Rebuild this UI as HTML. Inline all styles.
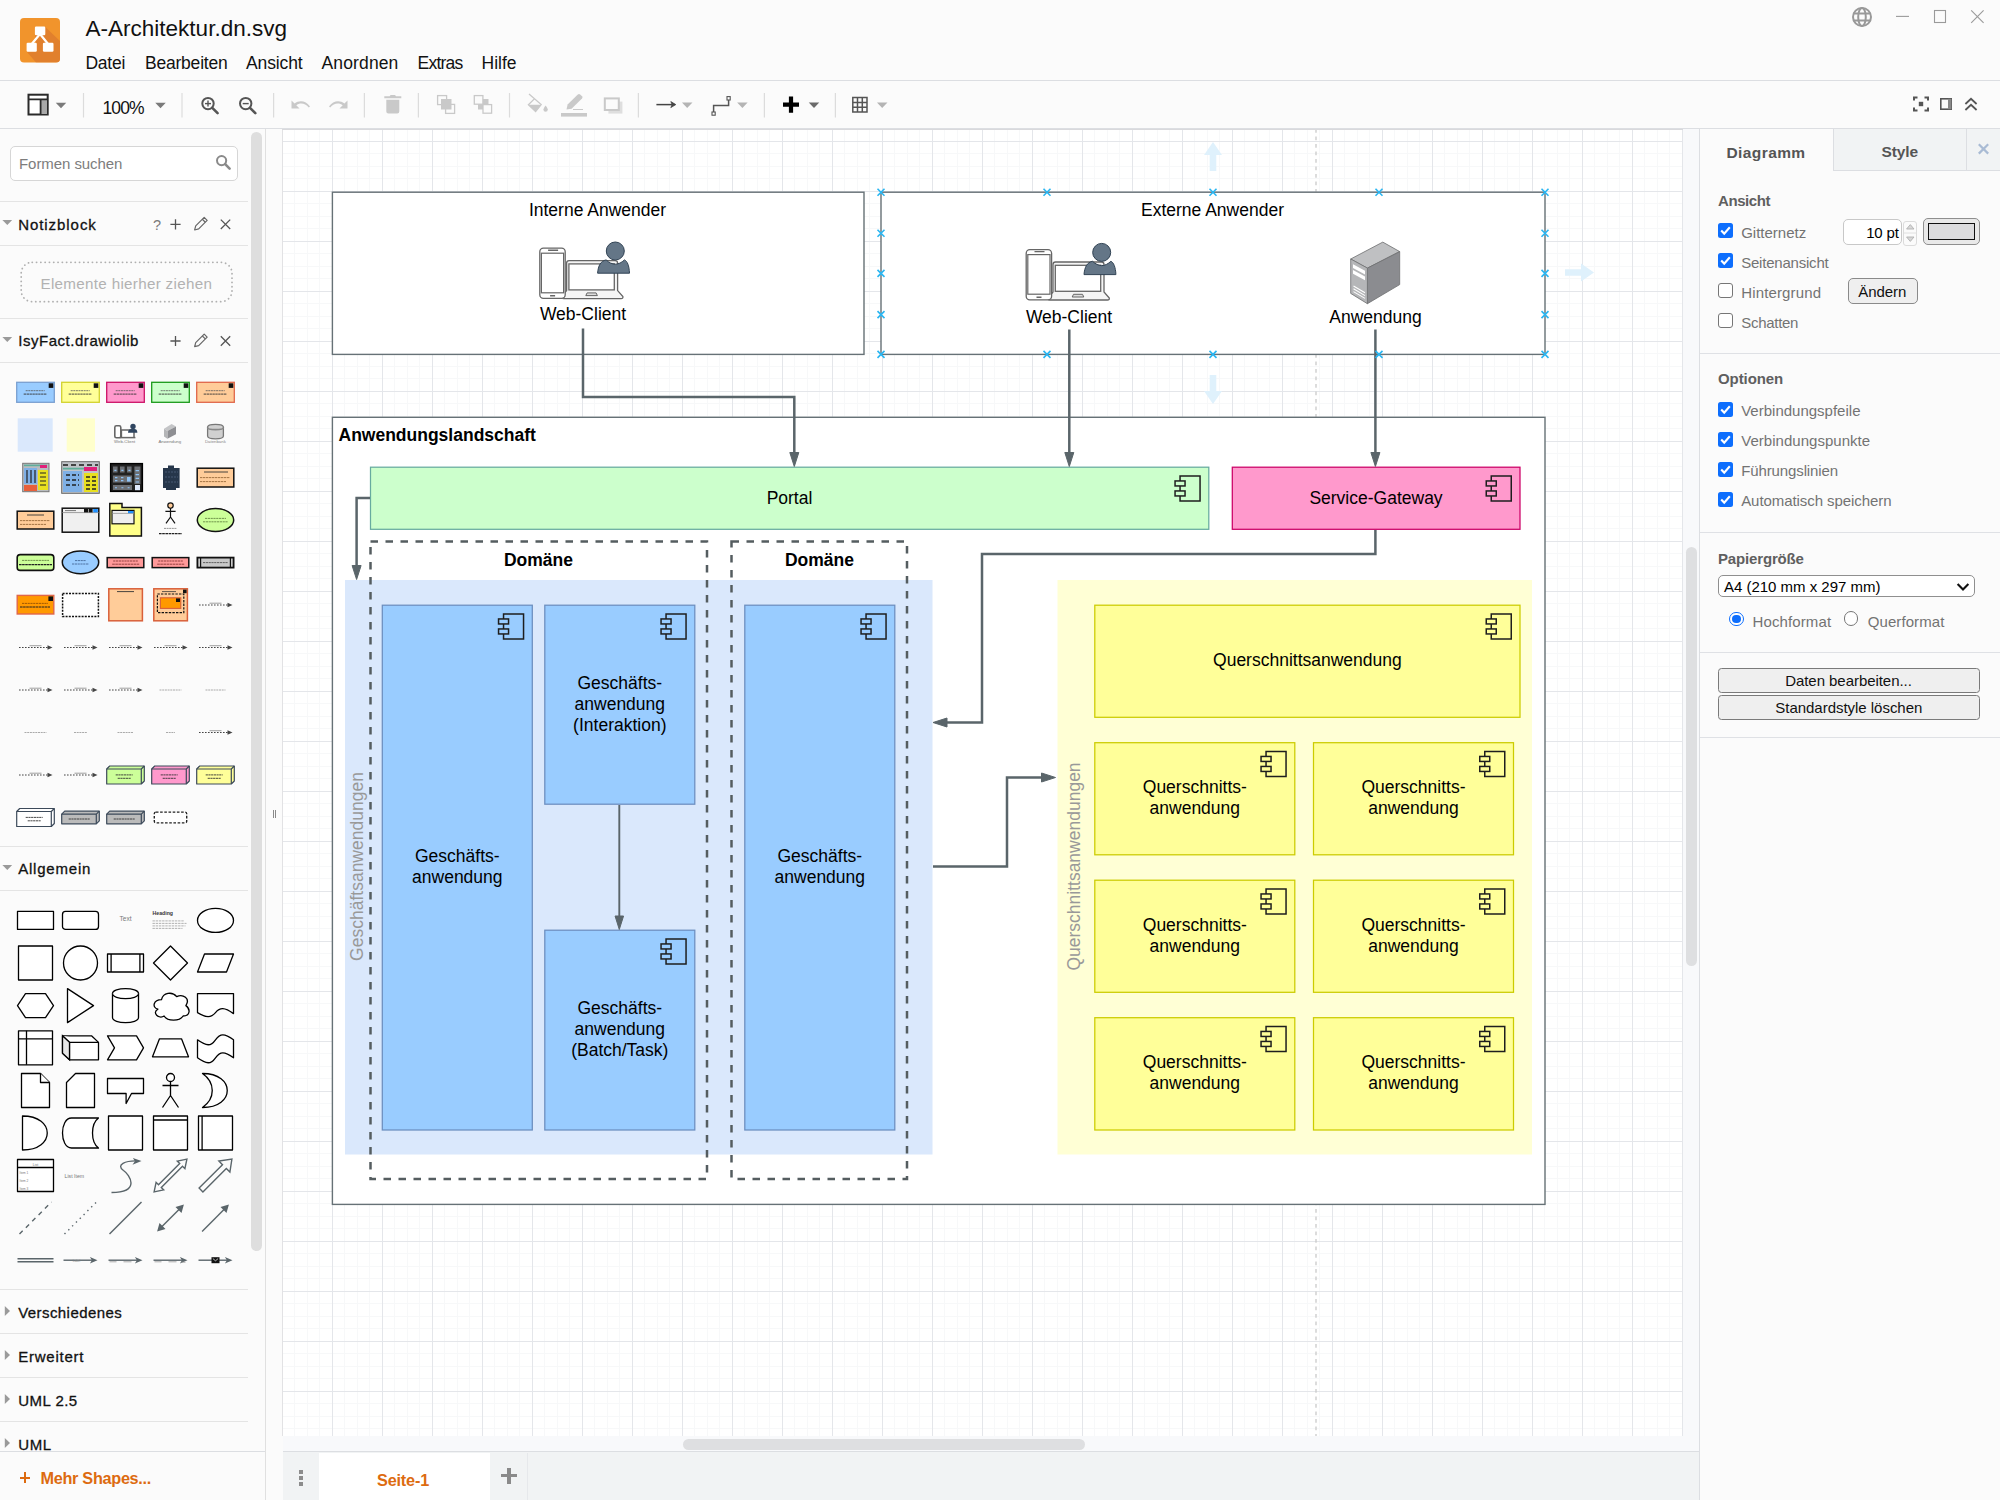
<!DOCTYPE html><html lang="de"><head><meta charset="utf-8"><title>A-Architektur.dn.svg</title><style>

*{box-sizing:border-box}
html,body{margin:0;padding:0}
body{width:2000px;height:1500px;overflow:hidden;background:#fbfbfb;font-family:"Liberation Sans",sans-serif;position:relative;color:#000}
.a{position:absolute}
.t{position:absolute;white-space:nowrap;line-height:1}
svg{position:absolute;overflow:visible}
svg text{font-family:"Liberation Sans",sans-serif}

</style></head><body>
<div class="a" style="left:283px;top:129px;width:1400px;height:1307px;background-color:#fff;background-image:linear-gradient(to right,#e4e6ea 0 1px,transparent 1px),linear-gradient(to bottom,#e4e6ea 0 1px,transparent 1px),linear-gradient(to right,transparent 0 12px,#f7f8f9 12px 13px,transparent 13px 25px,#f7f8f9 25px 26px,transparent 26px 37px,#f7f8f9 37px 38px,transparent 38px),linear-gradient(to bottom,transparent 0 12px,#f7f8f9 12px 13px,transparent 13px 25px,#f7f8f9 25px 26px,transparent 26px 37px,#f7f8f9 37px 38px,transparent 38px);background-size:50px 50px;background-position:49px 12px"></div>
<svg class="a" style="left:283px;top:129px" width="1400" height="1307" viewBox="283 129 1400 1307">
<defs><clipPath id="cv"><rect x="283" y="129" width="1400" height="1307"/></clipPath></defs>
<g clip-path="url(#cv)">
<path d="M1316 129V1436" stroke="#c8c8c8" stroke-width="1.25" stroke-dasharray="3.75 3.75" fill="none"/>
<g fill="#dff1fc"><path d="M1213 142l9 13h-5.7v16h-6.6v-16h-5.7z"/><path d="M1213 404l9-13h-5.7v-16h-6.6v16h-5.7z"/><path d="M1594 272.5l-13-9v5.7h-16v6.6h16v5.7z"/></g>
<rect x="332.4" y="192.2" width="531.6" height="162.2" fill="#fff" stroke="#667176" stroke-width="1.4" />
<rect x="881" y="192.2" width="664" height="162.2" fill="#fff" stroke="#667176" stroke-width="1.4" />
<rect x="332.4" y="417.3" width="1212.6" height="787.1000000000001" fill="#fff" stroke="#667176" stroke-width="1.4" />
<text x="597.5" y="215.60" font-size="17.5" text-anchor="middle" fill="#000">Interne Anwender</text>
<text x="1212.5" y="215.60" font-size="17.5" text-anchor="middle" fill="#000">Externe Anwender</text>
<text x="338.5" y="441" font-size="17.5" font-weight="bold">Anwendungslandschaft</text>
<g transform="translate(-486.4,-1.4)"><path d="M1053 292V264.5Q1053 262 1055.5 262H1101.5Q1104 262 1104 264.5V292L1109.3 298Q1109.6 300 1107.5 300H1050Q1047.6 300 1048 298Z" fill="#f5f5f5" stroke="#666" stroke-width="1.3"/><rect x="1055.3" y="265.3" width="45.4" height="26" fill="#fff" stroke="#666" stroke-width="1.3"/><path d="M1073.5 294.3H1082.5L1083.8 297H1072.2Z" fill="#ddd" stroke="#666" stroke-width="1"/><rect x="1026.2" y="249.6" width="25.4" height="50.2" rx="3.6" fill="#fff" stroke="#666" stroke-width="1.3"/><rect x="1027.8" y="254.6" width="22.2" height="39.6" fill="#fff" stroke="#666" stroke-width="1.2"/><path d="M1034.5 251.6H1044.5M1036.5 297.2H1041.5" stroke="#666" stroke-width="1.4"/><path d="M1084 274.6C1084.6 267 1087 262.5 1092.5 261.3C1095.5 264 1098.5 265.6 1101.7 265.6C1104.9 265.6 1107.9 264 1110.9 261.3C1113.5 262.3 1115.6 267 1115.9 274.6Z" fill="#647687" stroke="#314354" stroke-width="1"/><circle cx="1101.7" cy="252.4" r="9" fill="#647687" stroke="#314354" stroke-width="1"/></g>
<g transform="translate(0,0)"><path d="M1053 292V264.5Q1053 262 1055.5 262H1101.5Q1104 262 1104 264.5V292L1109.3 298Q1109.6 300 1107.5 300H1050Q1047.6 300 1048 298Z" fill="#f5f5f5" stroke="#666" stroke-width="1.3"/><rect x="1055.3" y="265.3" width="45.4" height="26" fill="#fff" stroke="#666" stroke-width="1.3"/><path d="M1073.5 294.3H1082.5L1083.8 297H1072.2Z" fill="#ddd" stroke="#666" stroke-width="1"/><rect x="1026.2" y="249.6" width="25.4" height="50.2" rx="3.6" fill="#fff" stroke="#666" stroke-width="1.3"/><rect x="1027.8" y="254.6" width="22.2" height="39.6" fill="#fff" stroke="#666" stroke-width="1.2"/><path d="M1034.5 251.6H1044.5M1036.5 297.2H1041.5" stroke="#666" stroke-width="1.4"/><path d="M1084 274.6C1084.6 267 1087 262.5 1092.5 261.3C1095.5 264 1098.5 265.6 1101.7 265.6C1104.9 265.6 1107.9 264 1110.9 261.3C1113.5 262.3 1115.6 267 1115.9 274.6Z" fill="#647687" stroke="#314354" stroke-width="1"/><circle cx="1101.7" cy="252.4" r="9" fill="#647687" stroke="#314354" stroke-width="1"/></g>
<g stroke="#6d6e70" stroke-width="0.8" stroke-linejoin="round"><path d="M1382.8 242.1L1399.7 251.6L1367.4 268.1L1350.7 259Z" fill="#bfc0c2"/><path d="M1399.7 251.6V284.6L1367.4 303.7V268.1Z" fill="#8b8c90"/><path d="M1350.7 259L1367.4 268.1V303.7L1350.7 293.4Z" fill="#b5b6b8"/></g><path d="M1353 264.3L1365 270.8V274.6L1353 268.1ZM1353 270L1365 276.5V280.3L1353 273.8Z" fill="#fff"/><path d="M1353.5 286L1365 292.8M1353.5 288.8L1365 295.6M1353.5 291.6L1365 298.4" stroke="#fff" stroke-width="1.1" fill="none"/>
<text x="583" y="320.30" font-size="17.5" text-anchor="middle" fill="#000">Web-Client</text>
<text x="1069" y="322.80" font-size="17.5" text-anchor="middle" fill="#000">Web-Client</text>
<text x="1375.5" y="322.80" font-size="17.5" text-anchor="middle" fill="#000">Anwendung</text>
<rect x="345" y="580" width="587.5" height="574.5" fill="#dae8fc" stroke="none" stroke-width="0" />
<rect x="1057.5" y="580" width="474.5" height="574.5" fill="#ffffd5" stroke="none" stroke-width="0" />
<rect x="370.5" y="467.2" width="838.3" height="62.099999999999966" fill="#ccffcc" stroke="#67ab9f" stroke-width="1.25" />
<g transform="translate(1175.05,475.95)" fill="none" stroke="#1e1e1e" stroke-width="1.5"><path d="M5 5V0H25V25H5V20M5 10V15"/><rect x="0" y="5" width="10" height="5"/><rect x="0" y="15" width="10" height="5"/></g>
<text x="789.5" y="504.10" font-size="17.5" text-anchor="middle" fill="#000">Portal</text>
<rect x="1232.3" y="467.2" width="287.70000000000005" height="62.099999999999966" fill="#ff99cc" stroke="#cc0066" stroke-width="1.25" />
<g transform="translate(1486.25,475.95)" fill="none" stroke="#1e1e1e" stroke-width="1.5"><path d="M5 5V0H25V25H5V20M5 10V15"/><rect x="0" y="5" width="10" height="5"/><rect x="0" y="15" width="10" height="5"/></g>
<text x="1376" y="504.10" font-size="17.5" text-anchor="middle" fill="#000">Service-Gateway</text>
<rect x="370.5" y="541.5" width="336.5" height="637.5" fill="none" stroke="#555d60" stroke-width="2.5" stroke-dasharray="7.5 7.5"/>
<rect x="731.5" y="541.5" width="175.5" height="637.5" fill="none" stroke="#555d60" stroke-width="2.5" stroke-dasharray="7.5 7.5"/>
<text x="538.5" y="566.10" font-size="17.5" text-anchor="middle" fill="#000" font-weight="bold">Domäne</text>
<text x="819.5" y="566.10" font-size="17.5" text-anchor="middle" fill="#000" font-weight="bold">Domäne</text>
<rect x="382.3" y="605.2" width="149.99999999999994" height="524.8" fill="#99ccff" stroke="#6c8ebf" stroke-width="1.25" />
<g transform="translate(498.55,613.95)" fill="none" stroke="#1e1e1e" stroke-width="1.5"><path d="M5 5V0H25V25H5V20M5 10V15"/><rect x="0" y="5" width="10" height="5"/><rect x="0" y="15" width="10" height="5"/></g>
<text x="457.29999999999995" y="861.70" font-size="17.5" text-anchor="middle" fill="#000">Geschäfts-</text><text x="457.29999999999995" y="882.70" font-size="17.5" text-anchor="middle" fill="#000">anwendung</text>
<rect x="544.8" y="605.2" width="150.0" height="199.0" fill="#99ccff" stroke="#6c8ebf" stroke-width="1.25" />
<g transform="translate(661.05,613.95)" fill="none" stroke="#1e1e1e" stroke-width="1.5"><path d="M5 5V0H25V25H5V20M5 10V15"/><rect x="0" y="5" width="10" height="5"/><rect x="0" y="15" width="10" height="5"/></g>
<text x="619.8" y="689.30" font-size="17.5" text-anchor="middle" fill="#000">Geschäfts-</text><text x="619.8" y="710.30" font-size="17.5" text-anchor="middle" fill="#000">anwendung</text><text x="619.8" y="731.30" font-size="17.5" text-anchor="middle" fill="#000">(Interaktion)</text>
<rect x="544.8" y="930.2" width="150.0" height="199.79999999999995" fill="#99ccff" stroke="#6c8ebf" stroke-width="1.25" />
<g transform="translate(661.05,938.95)" fill="none" stroke="#1e1e1e" stroke-width="1.5"><path d="M5 5V0H25V25H5V20M5 10V15"/><rect x="0" y="5" width="10" height="5"/><rect x="0" y="15" width="10" height="5"/></g>
<text x="619.8" y="1013.70" font-size="17.5" text-anchor="middle" fill="#000">Geschäfts-</text><text x="619.8" y="1034.70" font-size="17.5" text-anchor="middle" fill="#000">anwendung</text><text x="619.8" y="1055.70" font-size="17.5" text-anchor="middle" fill="#000">(Batch/Task)</text>
<rect x="744.8" y="605.2" width="150.0" height="524.8" fill="#99ccff" stroke="#6c8ebf" stroke-width="1.25" />
<g transform="translate(861.05,613.95)" fill="none" stroke="#1e1e1e" stroke-width="1.5"><path d="M5 5V0H25V25H5V20M5 10V15"/><rect x="0" y="5" width="10" height="5"/><rect x="0" y="15" width="10" height="5"/></g>
<text x="819.8" y="861.70" font-size="17.5" text-anchor="middle" fill="#000">Geschäfts-</text><text x="819.8" y="882.70" font-size="17.5" text-anchor="middle" fill="#000">anwendung</text>
<rect x="1094.8" y="605.2" width="425.20000000000005" height="112.09999999999991" fill="#ffff99" stroke="#cccc00" stroke-width="1.25" />
<g transform="translate(1486.25,613.95)" fill="none" stroke="#1e1e1e" stroke-width="1.5"><path d="M5 5V0H25V25H5V20M5 10V15"/><rect x="0" y="5" width="10" height="5"/><rect x="0" y="15" width="10" height="5"/></g>
<text x="1307.4" y="665.85" font-size="17.5" text-anchor="middle" fill="#000">Querschnittsanwendung</text>
<rect x="1094.8" y="742.7" width="200.0" height="112.09999999999991" fill="#ffff99" stroke="#cccc00" stroke-width="1.25" />
<g transform="translate(1261.05,751.45)" fill="none" stroke="#1e1e1e" stroke-width="1.5"><path d="M5 5V0H25V25H5V20M5 10V15"/><rect x="0" y="5" width="10" height="5"/><rect x="0" y="15" width="10" height="5"/></g>
<text x="1194.8" y="792.85" font-size="17.5" text-anchor="middle" fill="#000">Querschnitts-</text><text x="1194.8" y="813.85" font-size="17.5" text-anchor="middle" fill="#000">anwendung</text>
<rect x="1313.5" y="742.7" width="200.0" height="112.09999999999991" fill="#ffff99" stroke="#cccc00" stroke-width="1.25" />
<g transform="translate(1479.75,751.45)" fill="none" stroke="#1e1e1e" stroke-width="1.5"><path d="M5 5V0H25V25H5V20M5 10V15"/><rect x="0" y="5" width="10" height="5"/><rect x="0" y="15" width="10" height="5"/></g>
<text x="1413.5" y="792.85" font-size="17.5" text-anchor="middle" fill="#000">Querschnitts-</text><text x="1413.5" y="813.85" font-size="17.5" text-anchor="middle" fill="#000">anwendung</text>
<rect x="1094.8" y="880.2" width="200.0" height="112.09999999999991" fill="#ffff99" stroke="#cccc00" stroke-width="1.25" />
<g transform="translate(1261.05,888.95)" fill="none" stroke="#1e1e1e" stroke-width="1.5"><path d="M5 5V0H25V25H5V20M5 10V15"/><rect x="0" y="5" width="10" height="5"/><rect x="0" y="15" width="10" height="5"/></g>
<text x="1194.8" y="931.35" font-size="17.5" text-anchor="middle" fill="#000">Querschnitts-</text><text x="1194.8" y="952.35" font-size="17.5" text-anchor="middle" fill="#000">anwendung</text>
<rect x="1313.5" y="880.2" width="200.0" height="112.09999999999991" fill="#ffff99" stroke="#cccc00" stroke-width="1.25" />
<g transform="translate(1479.75,888.95)" fill="none" stroke="#1e1e1e" stroke-width="1.5"><path d="M5 5V0H25V25H5V20M5 10V15"/><rect x="0" y="5" width="10" height="5"/><rect x="0" y="15" width="10" height="5"/></g>
<text x="1413.5" y="931.35" font-size="17.5" text-anchor="middle" fill="#000">Querschnitts-</text><text x="1413.5" y="952.35" font-size="17.5" text-anchor="middle" fill="#000">anwendung</text>
<rect x="1094.8" y="1017.7" width="200.0" height="112.29999999999995" fill="#ffff99" stroke="#cccc00" stroke-width="1.25" />
<g transform="translate(1261.05,1026.45)" fill="none" stroke="#1e1e1e" stroke-width="1.5"><path d="M5 5V0H25V25H5V20M5 10V15"/><rect x="0" y="5" width="10" height="5"/><rect x="0" y="15" width="10" height="5"/></g>
<text x="1194.8" y="1067.95" font-size="17.5" text-anchor="middle" fill="#000">Querschnitts-</text><text x="1194.8" y="1088.95" font-size="17.5" text-anchor="middle" fill="#000">anwendung</text>
<rect x="1313.5" y="1017.7" width="200.0" height="112.29999999999995" fill="#ffff99" stroke="#cccc00" stroke-width="1.25" />
<g transform="translate(1479.75,1026.45)" fill="none" stroke="#1e1e1e" stroke-width="1.5"><path d="M5 5V0H25V25H5V20M5 10V15"/><rect x="0" y="5" width="10" height="5"/><rect x="0" y="15" width="10" height="5"/></g>
<text x="1413.5" y="1067.95" font-size="17.5" text-anchor="middle" fill="#000">Querschnitts-</text><text x="1413.5" y="1088.95" font-size="17.5" text-anchor="middle" fill="#000">anwendung</text>
<text transform="translate(363,866.5) rotate(-90)" font-size="17.5" text-anchor="middle" fill="#999">Geschäftsanwendungen</text>
<text transform="translate(1079.5,866.5) rotate(-90)" font-size="17.5" text-anchor="middle" fill="#999">Querschnittsanwendungen</text>
<path d="M583.00 328.50 L583.00 397.00 L794.30 397.00 L794.30 452.50" fill="none" stroke="#5a656a" stroke-width="2.5" stroke-linejoin="miter"/><path d="M794.30 466.50 L789.80 452.50 L798.80 452.50Z" fill="#5a656a" stroke="#5a656a" stroke-width="1" stroke-linejoin="miter"/>
<path d="M1069.30 329.50 L1069.30 452.50" fill="none" stroke="#5a656a" stroke-width="2.5" stroke-linejoin="miter"/><path d="M1069.30 466.50 L1064.80 452.50 L1073.80 452.50Z" fill="#5a656a" stroke="#5a656a" stroke-width="1" stroke-linejoin="miter"/>
<path d="M1375.40 329.50 L1375.40 452.50" fill="none" stroke="#5a656a" stroke-width="2.5" stroke-linejoin="miter"/><path d="M1375.40 466.50 L1370.90 452.50 L1379.90 452.50Z" fill="#5a656a" stroke="#5a656a" stroke-width="1" stroke-linejoin="miter"/>
<path d="M370.00 498.00 L356.60 498.00 L356.60 565.50" fill="none" stroke="#5a656a" stroke-width="2.5" stroke-linejoin="miter"/><path d="M356.60 579.50 L352.10 565.50 L361.10 565.50Z" fill="#5a656a" stroke="#5a656a" stroke-width="1" stroke-linejoin="miter"/>
<path d="M1375.40 530.00 L1375.40 554.00 L982.00 554.00 L982.00 722.50 L947.00 722.50" fill="none" stroke="#5a656a" stroke-width="2.5" stroke-linejoin="miter"/><path d="M933.00 722.50 L947.00 718.00 L947.00 727.00Z" fill="#5a656a" stroke="#5a656a" stroke-width="1" stroke-linejoin="miter"/>
<path d="M933.00 866.50 L1007.00 866.50 L1007.00 777.50 L1041.50 777.50" fill="none" stroke="#5a656a" stroke-width="2.5" stroke-linejoin="miter"/><path d="M1055.50 777.50 L1041.50 782.00 L1041.50 773.00Z" fill="#5a656a" stroke="#5a656a" stroke-width="1" stroke-linejoin="miter"/>
<path d="M619.30 805.00 L619.30 916.00" fill="none" stroke="#5a656a" stroke-width="1.9" stroke-linejoin="miter"/><path d="M619.30 929.50 L615.05 916.00 L623.55 916.00Z" fill="#5a656a" stroke="#5a656a" stroke-width="1" stroke-linejoin="miter"/>
<path d="M877.5 188.7L884.5 195.7M884.5 188.7L877.5 195.7" stroke="#29b6f2" stroke-width="1.6" fill="none"/>
<path d="M877.5 350.9L884.5 357.9M884.5 350.9L877.5 357.9" stroke="#29b6f2" stroke-width="1.6" fill="none"/>
<path d="M1043.5 188.7L1050.5 195.7M1050.5 188.7L1043.5 195.7" stroke="#29b6f2" stroke-width="1.6" fill="none"/>
<path d="M1043.5 350.9L1050.5 357.9M1050.5 350.9L1043.5 357.9" stroke="#29b6f2" stroke-width="1.6" fill="none"/>
<path d="M1209.5 188.7L1216.5 195.7M1216.5 188.7L1209.5 195.7" stroke="#29b6f2" stroke-width="1.6" fill="none"/>
<path d="M1209.5 350.9L1216.5 357.9M1216.5 350.9L1209.5 357.9" stroke="#29b6f2" stroke-width="1.6" fill="none"/>
<path d="M1375.5 188.7L1382.5 195.7M1382.5 188.7L1375.5 195.7" stroke="#29b6f2" stroke-width="1.6" fill="none"/>
<path d="M1375.5 350.9L1382.5 357.9M1382.5 350.9L1375.5 357.9" stroke="#29b6f2" stroke-width="1.6" fill="none"/>
<path d="M1541.5 188.7L1548.5 195.7M1548.5 188.7L1541.5 195.7" stroke="#29b6f2" stroke-width="1.6" fill="none"/>
<path d="M1541.5 350.9L1548.5 357.9M1548.5 350.9L1541.5 357.9" stroke="#29b6f2" stroke-width="1.6" fill="none"/>
<path d="M877.5 229.7L884.5 236.7M884.5 229.7L877.5 236.7" stroke="#29b6f2" stroke-width="1.6" fill="none"/>
<path d="M1541.5 229.7L1548.5 236.7M1548.5 229.7L1541.5 236.7" stroke="#29b6f2" stroke-width="1.6" fill="none"/>
<path d="M877.5 269.9L884.5 276.9M884.5 269.9L877.5 276.9" stroke="#29b6f2" stroke-width="1.6" fill="none"/>
<path d="M1541.5 269.9L1548.5 276.9M1548.5 269.9L1541.5 276.9" stroke="#29b6f2" stroke-width="1.6" fill="none"/>
<path d="M877.5 311.1L884.5 318.1M884.5 311.1L877.5 318.1" stroke="#29b6f2" stroke-width="1.6" fill="none"/>
<path d="M1541.5 311.1L1548.5 318.1M1548.5 311.1L1541.5 318.1" stroke="#29b6f2" stroke-width="1.6" fill="none"/>
</g></svg>
<div class="a" style="left:0px;top:80px;width:2000px;height:1px;background:#dcdee2"></div>
<div class="a" style="left:0px;top:128px;width:2000px;height:1px;background:#dcdee2"></div>
<div class="a" style="left:282px;top:129px;width:1px;height:1307px;background:#e2e2e4"></div>
<div class="a" style="left:282px;top:129px;width:1401px;height:1px;background:#d9d9dc"></div>
<div class="a" style="left:1683px;top:129px;width:16px;height:1323px;background:#f8f9fb"></div>
<div class="a" style="left:283px;top:1436px;width:1400px;height:16px;background:#f8f9fb"></div>
<div class="a" style="left:683px;top:1439px;width:402px;height:11px;background:#dedfe1;border-radius:6px"></div>
<div class="a" style="left:1686px;top:547px;width:11px;height:419px;background:#dedfe1;border-radius:6px"></div>
<div class="a" style="left:283px;top:1452px;width:1416px;height:48px;background:#f1f3f4"></div>
<div class="a" style="left:283px;top:1451px;width:1416px;height:1px;background:#dcdee2"></div>
<div class="a" style="left:319px;top:1453px;width:171px;height:47px;background:#fff"></div>
<div class="a" style="left:527px;top:1453px;width:1px;height:47px;background:#e6e8eb"></div>
<div class="a" style="left:299px;top:1469.5px;width:4px;height:4px;background:#8c8c8c"></div>
<div class="a" style="left:299px;top:1475.5px;width:4px;height:4px;background:#8c8c8c"></div>
<div class="a" style="left:299px;top:1481.5px;width:4px;height:4px;background:#8c8c8c"></div>
<div class="t" style="left:377px;top:1472px;font-size:16.25px;color:#dd6b10;font-weight:bold;letter-spacing:-0.185px;">Seite-1</div>
<div class="a" style="left:501px;top:1473.8px;width:16px;height:3.4px;background:#8a8a8a"></div>
<div class="a" style="left:507.3px;top:1467.5px;width:3.4px;height:16px;background:#8a8a8a"></div>
<div class="t" style="left:85.5px;top:18px;font-size:22.5px;color:#111;letter-spacing:0.008px;">A-Architektur.dn.svg</div>
<div class="t" style="left:85.5px;top:55px;font-size:17.5px;color:#111;letter-spacing:-0.272px;">Datei</div>
<div class="t" style="left:145px;top:55px;font-size:17.5px;color:#111;letter-spacing:-0.216px;">Bearbeiten</div>
<div class="t" style="left:246px;top:55px;font-size:17.5px;color:#111;letter-spacing:-0.127px;">Ansicht</div>
<div class="t" style="left:321.5px;top:55px;font-size:17.5px;color:#111;letter-spacing:0.137px;">Anordnen</div>
<div class="t" style="left:417.5px;top:55px;font-size:17.5px;color:#111;letter-spacing:-0.768px;">Extras</div>
<div class="t" style="left:481.5px;top:55px;font-size:17.5px;color:#111;letter-spacing:-0.003px;">Hilfe</div>
<div class="t" style="left:102.5px;top:100px;font-size:17.5px;color:#111;letter-spacing:-0.891px;">100%</div>
<svg class="a" style="left:0;top:0" width="2000" height="129" viewBox="0 0 2000 129"><defs><clipPath id="lg"><rect x="20" y="18" width="40" height="44.5" rx="4"/></clipPath></defs><rect x="20" y="18" width="40" height="44.5" rx="4" fill="#f1942c"/><path d="M45.3 27L60 41V62.5H36L27 52L36.5 51.5L35 35Z" fill="#e1802d" clip-path="url(#lg)"/><path d="M40 34L31.7 44M40 34L48.1 44" stroke="#fff" stroke-width="2.2" fill="none"/><rect x="34.9" y="26.5" width="10.4" height="8.8" rx="1.2" fill="#fff"/><rect x="26.6" y="42.8" width="10.2" height="8.9" rx="1.2" fill="#fff"/><rect x="42.9" y="42.8" width="10.6" height="8.9" rx="1.2" fill="#fff"/><rect x="82.9" y="93" width="1.2" height="24.5" fill="#dcdcdc"/><rect x="181.4" y="93" width="1.2" height="24.5" fill="#dcdcdc"/><rect x="273.0" y="93" width="1.2" height="24.5" fill="#dcdcdc"/><rect x="363.79999999999995" y="93" width="1.2" height="24.5" fill="#dcdcdc"/><rect x="417.79999999999995" y="93" width="1.2" height="24.5" fill="#dcdcdc"/><rect x="508.9" y="93" width="1.2" height="24.5" fill="#dcdcdc"/><rect x="637.8" y="93" width="1.2" height="24.5" fill="#dcdcdc"/><rect x="763.8" y="93" width="1.2" height="24.5" fill="#dcdcdc"/><rect x="834.8" y="93" width="1.2" height="24.5" fill="#dcdcdc"/><rect x="28.5" y="94.7" width="19.2" height="19.8" fill="#fff" stroke="#2a2a2a" stroke-width="2"/><rect x="41" y="99.5" width="6" height="14.5" fill="#a8a8a8"/><path d="M28.5 99.3H47.7M40.6 99.3V114.5" stroke="#2a2a2a" stroke-width="1.8" fill="none"/><path d="M55.75 102.75H66.25L61 108.25Z" fill="#7a7a7a"/><path d="M155.25 102.75H165.75L160.5 108.25Z" fill="#7a7a7a"/><circle cx="208" cy="103.6" r="5.7" fill="none" stroke="#555" stroke-width="2"/><path d="M212.3 107.9L217.6 113.2" stroke="#555" stroke-width="2.6" stroke-linecap="round"/><path d="M205 103.6H211" stroke="#555" stroke-width="1.4"/><path d="M208 100.6V106.6" stroke="#555" stroke-width="1.4"/><circle cx="245.7" cy="103.6" r="5.7" fill="none" stroke="#555" stroke-width="2"/><path d="M250.0 107.9L255.29999999999998 113.2" stroke="#555" stroke-width="2.6" stroke-linecap="round"/><path d="M242.7 103.6H248.7" stroke="#555" stroke-width="1.4"/><path d="M291.5 100.5V108.5H299.5L296.3 105.3C299.5 102.8 305 102.6 308.8 107.6L310 106.6C305.8 100.2 298.8 100.2 294.6 103.6Z" fill="#c9c9c9"/><path d="M347.5 100.5V108.5H339.5L342.7 105.3C339.5 102.8 334 102.6 330.2 107.6L329 106.6C333.2 100.2 340.2 100.2 344.4 103.6Z" fill="#c9c9c9"/><path d="M386.3 99.8H399.3V111.5Q399.3 113.6 397.2 113.6H388.4Q386.3 113.6 386.3 111.5ZM384.3 96.3H389.6L390.6 95.1H395L396 96.3H401.3V98.3H384.3Z" fill="#c9c9c9"/><rect x="437.6" y="95.6" width="9" height="9" fill="none" stroke="#c9c9c9" stroke-width="1.3"/><rect x="445.6" y="104.4" width="9" height="9" fill="none" stroke="#c9c9c9" stroke-width="1.3"/><rect x="441" y="99" width="10.5" height="10.5" fill="#c9c9c9"/><rect x="478" y="99" width="10.5" height="10.5" fill="#c9c9c9"/><rect x="474.3" y="95.6" width="8.6" height="8.6" fill="#fbfbfb" stroke="#c9c9c9" stroke-width="1.3"/><rect x="483" y="104.6" width="8.6" height="8.6" fill="#fbfbfb" stroke="#c9c9c9" stroke-width="1.3"/><path d="M529 94L541.2 104.6L535.6 111.6L528.4 104.8L534.6 98.6" fill="none" stroke="#c9c9c9" stroke-width="1.3"/><path d="M528.4 104.8H541.2L535.6 111.6Z" fill="#c9c9c9"/><path d="M545.6 105.4C547 107.4 547.8 108.6 547.8 109.6A2.2 2.2 0 0 1 543.4 109.6C543.4 108.6 544.2 107.4 545.6 105.4Z" fill="#c9c9c9"/><rect x="561" y="113" width="26" height="3.6" fill="#c9c9c9"/><path d="M566.5 109.5L567.6 104.6L577.8 94.4Q579 93.4 580.2 94.4L582 96.2Q583 97.4 582 98.6L571.6 108.8Z" fill="#c9c9c9"/><path d="M573 109.5H583" stroke="#c9c9c9" stroke-width="1"/><rect x="608.4" y="101.6" width="14" height="12" fill="#dedede"/><rect x="604.8" y="98.4" width="14" height="11.6" fill="#fbfbfb" stroke="#c9c9c9" stroke-width="2"/><path d="M656.4 104.6H672" stroke="#444" stroke-width="1.5" fill="none"/><path d="M675.8 104.6L670.8 101.6L672.2 104.6L670.8 107.6Z" fill="#444" stroke="#444" stroke-width="0.8"/><path d="M681.95 102.55H692.45L687.2 108.05Z" fill="#b4b4b4"/><path d="M737.15 102.55H747.65L742.4 108.05Z" fill="#b4b4b4"/><path d="M713.6 112V105.4H728.6V100" stroke="#555" stroke-width="1.5" fill="none"/><rect x="712" y="112" width="3.2" height="3.2" fill="#fff" stroke="#555" stroke-width="1.1"/><rect x="727" y="96.6" width="3.2" height="3.4" fill="#fff" stroke="#555" stroke-width="1.1"/><path d="M783 104.6H799M791 96.5V112.7" stroke="#000" stroke-width="4.2" fill="none"/><path d="M808.75 102.55H819.25L814 108.05Z" fill="#6a6a6a"/><path d="M852.8 97.6H867V112H852.8ZM857.5 97.6V112M862.3 97.6V112M852.8 102.4H867M852.8 107.2H867" stroke="#555" stroke-width="1.5" fill="none"/><path d="M876.95 102.55H887.45L882.2 108.05Z" fill="#b4b4b4"/><g stroke="#555" stroke-width="2" fill="none"><path d="M1914 100.5V97.5H1917.5M1924.5 97.5H1928V100.5M1928 107.5V110.5H1924.5M1917.5 110.5H1914V107.5"/></g><rect x="1918.8" y="101.8" width="4.4" height="4.4" fill="#555"/><rect x="1940.8" y="98.8" width="10.4" height="10.4" fill="none" stroke="#555" stroke-width="1.6"/><rect x="1948" y="98.8" width="3.4" height="10.4" fill="#888"/><path d="M1965.4 104L1971 98.8L1976.6 104M1965.4 110L1971 104.8L1976.6 110" stroke="#555" stroke-width="1.8" fill="none"/><g stroke="#999" stroke-width="2" fill="none"><circle cx="1862" cy="17" r="9"/><ellipse cx="1862" cy="17" rx="3.8" ry="9"/><path d="M1853.6 13.6H1870.4M1853.6 20.4H1870.4"/></g><path d="M1896 16.4H1909" stroke="#9a9a9a" stroke-width="1.1"/><rect x="1934.5" y="10.5" width="11" height="12" fill="none" stroke="#9a9a9a" stroke-width="1.1"/><path d="M1971.2 10.4L1983.6 22.8M1983.6 10.4L1971.2 22.8" stroke="#9a9a9a" stroke-width="1.1"/></svg>
<div class="a" style="left:265px;top:129px;width:1px;height:1371px;background:#e0e0e0"></div>
<div class="a" style="left:251px;top:132px;width:11px;height:1119px;background:#dedede;border-radius:6px"></div>
<div class="a" style="left:10px;top:146px;width:228px;height:35px;background:#fff;border:1px solid #d6d6d6;border-radius:5px"></div>
<div class="t" style="left:19px;top:156px;font-size:15px;color:#7d7d7d;letter-spacing:-0.063px;">Formen suchen</div>
<div class="a" style="left:0px;top:201px;width:248px;height:1px;background:#e4e4e4"></div>
<div class="a" style="left:0px;top:245px;width:248px;height:1px;background:#e4e4e4"></div>
<div class="a" style="left:0px;top:318px;width:248px;height:1px;background:#e4e4e4"></div>
<div class="a" style="left:0px;top:362px;width:248px;height:1px;background:#e4e4e4"></div>
<div class="a" style="left:0px;top:846px;width:248px;height:1px;background:#e4e4e4"></div>
<div class="a" style="left:0px;top:890px;width:248px;height:1px;background:#e4e4e4"></div>
<div class="a" style="left:0px;top:1289px;width:248px;height:1px;background:#e4e4e4"></div>
<div class="a" style="left:0px;top:1333px;width:248px;height:1px;background:#e4e4e4"></div>
<div class="a" style="left:0px;top:1377px;width:248px;height:1px;background:#e4e4e4"></div>
<div class="a" style="left:0px;top:1421px;width:248px;height:1px;background:#e4e4e4"></div>
<div class="a" style="left:0px;top:1451px;width:265px;height:1px;background:#dcdee2"></div>
<div class="t" style="left:18.2px;top:217px;font-size:15px;color:#111;letter-spacing:0.940px;-webkit-text-stroke:0.3px #111;">Notizblock</div>
<div class="t" style="left:18.2px;top:333px;font-size:15px;color:#111;letter-spacing:0.535px;-webkit-text-stroke:0.3px #111;">IsyFact.drawiolib</div>
<div class="t" style="left:18.2px;top:861px;font-size:15px;color:#111;letter-spacing:0.792px;-webkit-text-stroke:0.3px #111;">Allgemein</div>
<div class="t" style="left:18.2px;top:1305px;font-size:15px;color:#111;letter-spacing:0.430px;-webkit-text-stroke:0.3px #111;">Verschiedenes</div>
<div class="t" style="left:18.2px;top:1349px;font-size:15px;color:#111;letter-spacing:0.757px;-webkit-text-stroke:0.3px #111;">Erweitert</div>
<div class="t" style="left:18.2px;top:1393px;font-size:15px;color:#111;letter-spacing:0.480px;-webkit-text-stroke:0.3px #111;">UML 2.5</div>
<div class="t" style="left:18.2px;top:1437px;font-size:15px;color:#111;letter-spacing:0.609px;-webkit-text-stroke:0.3px #111;">UML</div>
<div class="t" style="left:40.5px;top:276px;font-size:15.2px;color:#b2b2b2;letter-spacing:0.307px;">Elemente hierher ziehen</div>
<div class="a" style="left:0px;top:1452px;width:265px;height:48px;background:#fbfbfb"></div>
<div class="t" style="left:40.5px;top:1470px;font-size:16.25px;color:#dd6b10;font-weight:bold;letter-spacing:-0.299px;">Mehr Shapes...</div>
<div class="a" style="left:19.5px;top:1476.6px;width:10.5px;height:2.2px;background:#dd6b10"></div>
<div class="a" style="left:23.65px;top:1472.4px;width:2.2px;height:10.6px;background:#dd6b10"></div>
<div class="a" style="left:272.6px;top:809.5px;width:1.2px;height:8px;background:#8a8a8a"></div>
<div class="a" style="left:275.2px;top:809.5px;width:1.2px;height:8px;background:#8a8a8a"></div>
<svg class="a" style="left:0;top:129px" width="266" height="1323" viewBox="0 129 266 1323"><circle cx="221.6" cy="160.6" r="4.6" fill="none" stroke="#8a8a8a" stroke-width="2"/><path d="M225.2 164.2L229.6 168.6" stroke="#8a8a8a" stroke-width="2.6" stroke-linecap="round"/><rect x="21.2" y="262.3" width="210.8" height="39.4" rx="11" fill="none" stroke="#b0b0b0" stroke-width="1.8" stroke-dasharray="0.1 4.2" stroke-linecap="round"/><path d="M2.4 219.9H12.2L7.3 225.1Z" fill="#9a9a9a"/><text x="157" y="229.70000000000002" font-size="14.5" fill="#7a7a7a" text-anchor="middle">?</text><path d="M170.4 224.3H180.6M175.5 219.20000000000002V229.4" stroke="#555" stroke-width="1.3" fill="none"/><g transform="translate(200.3,224.3) rotate(45)"><path d="M-2.1 -7.6H2.1V4.4L0 8L-2.1 4.4Z" fill="none" stroke="#666" stroke-width="1.2" stroke-linejoin="round"/><path d="M-2.1 -5H2.1" stroke="#666" stroke-width="1.2"/></g><path d="M220.8 219.60000000000002L230.2 229.0M230.2 219.60000000000002L220.8 229.0" stroke="#555" stroke-width="1.3" fill="none"/><path d="M2.4 336.9H12.2L7.3 342.1Z" fill="#9a9a9a"/><path d="M170.4 341H180.6M175.5 335.9V346.1" stroke="#555" stroke-width="1.3" fill="none"/><g transform="translate(200.3,341) rotate(45)"><path d="M-2.1 -7.6H2.1V4.4L0 8L-2.1 4.4Z" fill="none" stroke="#666" stroke-width="1.2" stroke-linejoin="round"/><path d="M-2.1 -5H2.1" stroke="#666" stroke-width="1.2"/></g><path d="M220.8 336.3L230.2 345.7M230.2 336.3L220.8 345.7" stroke="#555" stroke-width="1.3" fill="none"/><path d="M2.4 864.9H12.2L7.3 870.1Z" fill="#9a9a9a"/><path d="M4.8 1306L10 1311L4.8 1316Z" fill="#9a9a9a"/><path d="M4.8 1350L10 1355L4.8 1360Z" fill="#9a9a9a"/><path d="M4.8 1394L10 1399L4.8 1404Z" fill="#9a9a9a"/><path d="M4.8 1438L10 1443L4.8 1448Z" fill="#9a9a9a"/><rect x="16.7" y="382.3" width="37.6" height="20" fill="#99ccff" stroke="#7a9fd0" stroke-width="1.3"/><rect x="48.7" y="383.3" width="4.6" height="4.6" fill="#111"/><path d="M25.7 390.7H44.7" stroke="#555" stroke-width="0.8" stroke-dasharray="2 0.6"/><path d="M23.7 394.1H46.7" stroke="#333" stroke-width="0.9" stroke-dasharray="2.4 0.5"/><rect x="61.7" y="382.3" width="37.6" height="20" fill="#ffff99" stroke="#d2d22e" stroke-width="1.3"/><rect x="93.7" y="383.3" width="4.6" height="4.6" fill="#111"/><path d="M70.7 390.7H89.7" stroke="#555" stroke-width="0.8" stroke-dasharray="2 0.6"/><path d="M68.7 394.1H91.7" stroke="#333" stroke-width="0.9" stroke-dasharray="2.4 0.5"/><rect x="106.7" y="382.3" width="37.6" height="20" fill="#ff99cc" stroke="#cc1166" stroke-width="1.3"/><rect x="138.7" y="383.3" width="4.6" height="4.6" fill="#111"/><path d="M115.7 390.7H134.7" stroke="#555" stroke-width="0.8" stroke-dasharray="2 0.6"/><path d="M113.7 394.1H136.7" stroke="#333" stroke-width="0.9" stroke-dasharray="2.4 0.5"/><rect x="151.7" y="382.3" width="37.6" height="20" fill="#ccffcc" stroke="#1a9a1a" stroke-width="1.3"/><rect x="183.7" y="383.3" width="4.6" height="4.6" fill="#111"/><path d="M160.7 390.7H179.7" stroke="#555" stroke-width="0.8" stroke-dasharray="2 0.6"/><path d="M158.7 394.1H181.7" stroke="#333" stroke-width="0.9" stroke-dasharray="2.4 0.5"/><rect x="196.7" y="382.3" width="37.6" height="20" fill="#ffcc99" stroke="#e0664a" stroke-width="1.3"/><rect x="228.7" y="383.3" width="4.6" height="4.6" fill="#111"/><path d="M205.7 390.7H224.7" stroke="#555" stroke-width="0.8" stroke-dasharray="2 0.6"/><path d="M203.7 394.1H226.7" stroke="#333" stroke-width="0.9" stroke-dasharray="2.4 0.5"/><rect x="17.7" y="418.3" width="35" height="33.4" fill="#dae8fc"/><rect x="66.7" y="418.3" width="28.3" height="33.4" fill="#ffffcc"/><g><path d="M121.4 437V430H134V437" fill="#fff" stroke="#666" stroke-width="1.5"/><path d="M119.6 437.6H135.4" stroke="#666" stroke-width="1.5"/><rect x="114.8" y="425.8" width="6" height="12" rx="1.6" fill="#fff" stroke="#666" stroke-width="1.6"/><circle cx="133" cy="426.4" r="2.7" fill="#2f4560"/><path d="M128 432.8C128.2 429.6 130 428.8 133 429.2C136 428.8 137.2 429.6 137.4 432.8Z" fill="#2f4560"/><text x="124.7" y="443" font-size="4.3" fill="#777" text-anchor="middle">Web-Client</text></g><g><path d="M171.6 424L176 426.4L167.4 431L164 428.8Z" fill="#c4c5c7"/><path d="M176 426.4V434.2L167.4 438.8V431Z" fill="#8e8f93"/><path d="M164 428.8L167.4 431V438.8L164 436.4Z" fill="#b4b5b7"/><text x="169.8" y="443" font-size="4.3" fill="#777" text-anchor="middle">Anwendung</text></g><g><path d="M207.6 427C207.6 423.4 223.4 423.4 223.4 427V436C223.4 439.8 207.6 439.8 207.6 436Z" fill="#d0d0d0" stroke="#777" stroke-width="1.3"/><path d="M207.6 427.4C207.6 430.4 223.4 430.4 223.4 427.4" fill="none" stroke="#888" stroke-width="1.6"/><text x="215.4" y="443" font-size="4.3" fill="#888" text-anchor="middle">Datenbank</text></g><g><rect x="22.7" y="463.3" width="26.3" height="28.4" fill="#b8bcc0" stroke="#777" stroke-width="1"/><rect x="24" y="468" width="13" height="16" fill="#7fb0e6"/><rect x="38" y="470" width="10" height="20" fill="#e8e020"/><rect x="24" y="485" width="13" height="6" fill="#e8603a"/><path d="M24 465.4H47" stroke="#5fae9a" stroke-width="1.6"/><path d="M27 470V483M31 470V483M35 470V483M40 473H46M40 477H46M40 481H46M40 485H46" stroke="#222" stroke-width="1.2"/><rect x="40" y="465" width="7" height="3" fill="#e0207a"/></g><g><rect x="61.7" y="461.7" width="37.6" height="31.6" fill="#c0c4c8" stroke="#666" stroke-width="1"/><rect x="63" y="471" width="19" height="21" fill="#7fb0e6"/><rect x="84" y="473" width="14" height="19" fill="#e8e020"/><path d="M63 465H98" stroke="#444" stroke-width="2" stroke-dasharray="5 3"/><path d="M63 468.6H84" stroke="#5fae9a" stroke-width="1.8"/><rect x="84" y="467" width="13" height="4" fill="#e0207a"/><path d="M66 475H79M66 480H79M66 485H79M86 477H96M86 481H96M86 485H96M86 489H96" stroke="#222" stroke-width="1.5" stroke-dasharray="4 2"/></g><g><rect x="110.6" y="463.6" width="31.8" height="27.8" fill="#222" stroke="#000" stroke-width="1.4"/><path d="M113 466.6H117.6V472.6H113ZM120 466.6H124.6V472.6H120ZM127 466.6H131.6V472.6H127ZM134.4 466.6H140.4V484H134.4ZM113 475.4H132V482.6H113ZM113 485H132V490H113Z" fill="#6c6f74"/><path d="M114.4 470.4H116.4M121.4 470.4H123.4M128.4 470.4H130.4M135.6 470.6H139M135.6 474.6H139M135.6 478.4H139M135.6 482H139M115 477.6H117.4M121 477.6H123.4M115 480.6H117.4M121 480.6H123.4M115 487.8H117M121.4 487.8H123.4M127.6 487.8H129.6" stroke="#8ec2f5" stroke-width="1.1"/><rect x="127" y="477" width="3.6" height="4.6" fill="#8ec2f5"/><rect x="135" y="485" width="5" height="5.2" fill="#dfe9fb"/></g><g><path d="M163 468H168V465.4H174V468H179.6V488H176V490H166V488H163Z" fill="#26364a"/><path d="M165 472H178M165 477H178M165 482H178" stroke="#3c4e66" stroke-width="1.4" stroke-dasharray="2 1"/></g><g><rect x="197.2" y="468.2" width="36.6" height="18.8" fill="#ffcc99" stroke="#111" stroke-width="1.5"/><path d="M204 472H228" stroke="#333" stroke-width="0.9"/><path d="M200 477.6H230M200 481.6H226" stroke="#9a6a3a" stroke-width="0.9" stroke-dasharray="2.4 0.6"/></g><g><rect x="17.2" y="511.2" width="36.6" height="17.8" fill="#ffcc99" stroke="#111" stroke-width="1.5"/><path d="M27 515H44" stroke="#333" stroke-width="0.9"/><path d="M20 520.6H50M20 524.4H46" stroke="#9a6a3a" stroke-width="0.9" stroke-dasharray="2.4 0.6"/></g><g><rect x="62.2" y="508.2" width="36.6" height="24" fill="#f0f0f0" stroke="#111" stroke-width="1.5"/><path d="M62.2 512.6H98.8" stroke="#888" stroke-width="0.8"/><rect x="84" y="509" width="4" height="3.4" fill="#111"/><rect x="88.6" y="509" width="4" height="3.4" fill="#111"/><rect x="93.2" y="509" width="4.6" height="3.4" fill="#1e90ff"/><path d="M65 510.6H76" stroke="#555" stroke-width="0.8"/></g><g><path d="M109.8 536V503.6H122V507.4H141.4V536Z" fill="#ffff88" stroke="#111" stroke-width="1.5"/><rect x="112" y="510.4" width="22" height="13.4" fill="#eee" stroke="#111" stroke-width="1.2"/><path d="M112 513.4H134" stroke="#888" stroke-width="0.7"/><rect x="128" y="511" width="5.4" height="2.2" fill="#1e90ff"/></g><g><circle cx="170.5" cy="505.6" r="2.7" fill="#ffcc99" stroke="#111" stroke-width="1.2"/><path d="M170.5 508.4V517M165.4 511.4H175.6M170.5 517L166 523.4M170.5 517L175 523.4" stroke="#111" stroke-width="1.2" fill="none"/><path d="M164 528.4H177" stroke="#888" stroke-width="0.9" stroke-dasharray="2 0.6"/><path d="M159 533.6H182" stroke="#222" stroke-width="1.2" stroke-dasharray="2.6 0.6"/></g><g><ellipse cx="215.5" cy="520" rx="18.2" ry="11.4" fill="#ccff99" stroke="#111" stroke-width="1.5"/><path d="M205 518.4H226M203 521.8H228" stroke="#5a7a3a" stroke-width="0.8" stroke-dasharray="2.2 0.6"/></g><g><rect x="17.2" y="554.6" width="36.6" height="15.8" rx="3" fill="#ccff99" stroke="#111" stroke-width="1.6"/><path d="M22 560.4H49" stroke="#5a7a3a" stroke-width="0.8" stroke-dasharray="2.2 0.6"/><path d="M19 564.6H52" stroke="#222" stroke-width="1.2" stroke-dasharray="2.6 0.5"/></g><g><ellipse cx="80.5" cy="562.3" rx="18.2" ry="11.4" fill="#99ccff" stroke="#111" stroke-width="1.5"/><path d="M75 560.6H86M72 564H89" stroke="#3a5a8a" stroke-width="0.8" stroke-dasharray="2.2 0.6"/></g><g><rect x="107.2" y="557.6" width="36.6" height="10" fill="#ff9999" stroke="#111" stroke-width="1.5"/><path d="M113.2 561H138.2" stroke="#7a2a2a" stroke-width="0.8" stroke-dasharray="2.2 0.6"/><path d="M112.2 564.2H139.2" stroke="#7a2a2a" stroke-width="0.8" stroke-dasharray="2.6 0.5"/></g><g><rect x="152.2" y="557.6" width="36.6" height="10" fill="#ff9999" stroke="#111" stroke-width="1.5"/><path d="M158.2 561H183.2" stroke="#7a2a2a" stroke-width="0.8" stroke-dasharray="2.2 0.6"/><path d="M157.2 564.2H184.2" stroke="#7a2a2a" stroke-width="0.8" stroke-dasharray="2.6 0.5"/></g><g><rect x="197.4" y="557.6" width="36.2" height="10" fill="#c8c8c8" stroke="#111" stroke-width="1.8"/><path d="M200.6 557.6V567.6M230.4 557.6V567.6" stroke="#111" stroke-width="1.2"/><path d="M203 562.6H228" stroke="#555" stroke-width="0.9" stroke-dasharray="2.2 0.6"/></g><g><rect x="17.2" y="595.4" width="36.6" height="18.6" fill="#ff9900" stroke="#e0664a" stroke-width="1.4"/><rect x="48.4" y="596.4" width="4.6" height="4.6" fill="#111"/><path d="M22 603.4H48" stroke="#8a4a00" stroke-width="0.8" stroke-dasharray="2.2 0.6"/><path d="M20 607H50" stroke="#222" stroke-width="1" stroke-dasharray="2.6 0.5"/></g><rect x="62.6" y="593.4" width="35.8" height="23" fill="#fff" stroke="#111" stroke-width="1.5" stroke-dasharray="2 1.2"/><g><rect x="108.8" y="588.8" width="33.6" height="32" fill="#ffcc99" stroke="#d9603a" stroke-width="1.5"/><path d="M117 591.6H134" stroke="#333" stroke-width="0.9"/></g><g><rect x="153.8" y="588.8" width="33.6" height="32" fill="#ffcc99" stroke="#d9603a" stroke-width="1.5"/><rect x="183" y="589.6" width="3.6" height="3.6" fill="#111"/><rect x="157.4" y="594" width="26.4" height="18.6" fill="none" stroke="#111" stroke-width="1.2" stroke-dasharray="2.4 1.2"/><rect x="160.4" y="597.8" width="20.4" height="10.6" fill="#ff9900" stroke="#d9603a" stroke-width="1.1"/><rect x="176" y="598.4" width="4" height="3.6" fill="#111"/><path d="M162 591.6H176" stroke="#333" stroke-width="0.8"/></g><path d="M199.0 605H228.5" stroke="#444" stroke-width="1" stroke-dasharray="1.6 1.4" fill="none"/><path d="M232.5 605L227.5 602.8V607.2Z" fill="#444"/><path d="M209.5 603.2H221.5" stroke="#888" stroke-width="0.8"/><path d="M19.0 647.5H48.5" stroke="#444" stroke-width="1" stroke-dasharray="1.6 1.4" fill="none"/><path d="M52.5 647.5L47.5 645.3V649.7Z" fill="#444"/><path d="M29.5 645.7H41.5" stroke="#888" stroke-width="0.8"/><path d="M64.0 647.5H93.5" stroke="#444" stroke-width="1" stroke-dasharray="1.6 1.4" fill="none"/><path d="M97.5 647.5L92.5 645.3V649.7Z" fill="#444"/><path d="M74.5 645.7H86.5" stroke="#888" stroke-width="0.8"/><path d="M109.0 647.5H138.5" stroke="#444" stroke-width="1" stroke-dasharray="1.6 1.4" fill="none"/><path d="M142.5 647.5L137.5 645.3V649.7Z" fill="#444"/><path d="M119.5 645.7H131.5" stroke="#888" stroke-width="0.8"/><path d="M154.0 647.5H183.5" stroke="#444" stroke-width="1" stroke-dasharray="1.6 1.4" fill="none"/><path d="M187.5 647.5L182.5 645.3V649.7Z" fill="#444"/><path d="M164.5 645.7H176.5" stroke="#888" stroke-width="0.8"/><path d="M199.0 647.5H228.5" stroke="#444" stroke-width="1" stroke-dasharray="1.6 1.4" fill="none"/><path d="M232.5 647.5L227.5 645.3V649.7Z" fill="#444"/><path d="M209.5 645.7H221.5" stroke="#888" stroke-width="0.8"/><path d="M19.0 690H48.5" stroke="#444" stroke-width="1" stroke-dasharray="1.6 1.4" fill="none"/><path d="M52.5 690L47.5 687.8V692.2Z" fill="#444"/><path d="M29.5 688.2H41.5" stroke="#888" stroke-width="0.8"/><path d="M64.0 690H93.5" stroke="#444" stroke-width="1" stroke-dasharray="1.6 1.4" fill="none"/><path d="M97.5 690L92.5 687.8V692.2Z" fill="#444"/><path d="M74.5 688.2H86.5" stroke="#888" stroke-width="0.8"/><path d="M109.0 690H138.5" stroke="#444" stroke-width="1" stroke-dasharray="1.6 1.4" fill="none"/><path d="M142.5 690L137.5 687.8V692.2Z" fill="#444"/><path d="M119.5 688.2H131.5" stroke="#888" stroke-width="0.8"/><path d="M159.5 690H181.5" stroke="#aaa" stroke-width="1" stroke-dasharray="2 0.7"/><path d="M205.5 690H225.5" stroke="#aaa" stroke-width="1" stroke-dasharray="2 0.7"/><path d="M24.5 732.5H46.5" stroke="#aaa" stroke-width="1" stroke-dasharray="2 0.7"/><path d="M74.0 732.5H87.0" stroke="#aaa" stroke-width="1" stroke-dasharray="2 0.7"/><path d="M117.5 732.5H133.5" stroke="#aaa" stroke-width="1" stroke-dasharray="2 0.7"/><path d="M166.0 732.5H175.0" stroke="#aaa" stroke-width="1" stroke-dasharray="2 0.7"/><path d="M199.0 732.5H228.5" stroke="#444" stroke-width="1" stroke-dasharray="1.6 1.4" fill="none"/><path d="M232.5 732.5L227.5 730.3V734.7Z" fill="#444"/><path d="M209.5 730.7H221.5" stroke="#888" stroke-width="0.8"/><path d="M19.0 775H48.5" stroke="#444" stroke-width="1" stroke-dasharray="1.6 1.4" fill="none"/><path d="M52.5 775L47.5 772.8V777.2Z" fill="#444"/><path d="M29.5 773.2H41.5" stroke="#888" stroke-width="0.8"/><path d="M64.0 775H93.5" stroke="#444" stroke-width="1" stroke-dasharray="1.6 1.4" fill="none"/><path d="M97.5 775L92.5 772.8V777.2Z" fill="#444"/><path d="M74.5 773.2H86.5" stroke="#888" stroke-width="0.8"/><path d="M106.7 769.0L109.7 766.0H144.3V781.0L141.3 784.0H106.7Z" fill="#ccff99" stroke="#3c4a5a" stroke-width="1.2" stroke-linejoin="round"/><path d="M106.7 769.0H141.3V784.0M141.3 769.0L144.3 766.0" fill="none" stroke="#3c4a5a" stroke-width="1.2"/><path d="M115.7 774.9H132.7M117.7 778.3H130.7" stroke="#333" stroke-width="0.9" stroke-dasharray="2.2 0.5"/><path d="M151.7 769.0L154.7 766.0H189.29999999999998V781.0L186.29999999999998 784.0H151.7Z" fill="#ff99cc" stroke="#3c4a5a" stroke-width="1.2" stroke-linejoin="round"/><path d="M151.7 769.0H186.29999999999998V784.0M186.29999999999998 769.0L189.29999999999998 766.0" fill="none" stroke="#3c4a5a" stroke-width="1.2"/><path d="M160.7 774.9H177.7M162.7 778.3H175.7" stroke="#333" stroke-width="0.9" stroke-dasharray="2.2 0.5"/><path d="M196.7 769.0L199.7 766.0H234.29999999999998V781.0L231.29999999999998 784.0H196.7Z" fill="#ffff99" stroke="#3c4a5a" stroke-width="1.2" stroke-linejoin="round"/><path d="M196.7 769.0H231.29999999999998V784.0M231.29999999999998 769.0L234.29999999999998 766.0" fill="none" stroke="#3c4a5a" stroke-width="1.2"/><path d="M205.7 774.9H222.7M207.7 778.3H220.7" stroke="#333" stroke-width="0.9" stroke-dasharray="2.2 0.5"/><path d="M16.7 811.5L19.7 808.5H54.3V823.5L51.3 826.5H16.7Z" fill="#fff" stroke="#3c4a5a" stroke-width="1.2" stroke-linejoin="round"/><path d="M16.7 811.5H51.3V826.5M51.3 811.5L54.3 808.5" fill="none" stroke="#3c4a5a" stroke-width="1.2"/><path d="M25.7 817.4H42.7M27.7 820.8H40.7" stroke="#333" stroke-width="0.9" stroke-dasharray="2.2 0.5"/><path d="M61.7 814.2L64.7 811.2H99.30000000000001V820.8000000000001L96.30000000000001 823.8000000000001H61.7Z" fill="#bbb" stroke="#3c4a5a" stroke-width="1.2" stroke-linejoin="round"/><path d="M61.7 814.2H96.30000000000001V823.8000000000001M96.30000000000001 814.2L99.30000000000001 811.2" fill="none" stroke="#3c4a5a" stroke-width="1.2"/><path d="M68.7 819.0H89.7" stroke="#333" stroke-width="0.9" stroke-dasharray="2.2 0.5"/><path d="M106.7 814.2L109.7 811.2H144.3V820.8000000000001L141.3 823.8000000000001H106.7Z" fill="#bbb" stroke="#3c4a5a" stroke-width="1.2" stroke-linejoin="round"/><path d="M106.7 814.2H141.3V823.8000000000001M141.3 814.2L144.3 811.2" fill="none" stroke="#3c4a5a" stroke-width="1.2"/><path d="M113.7 819.0H134.7" stroke="#333" stroke-width="0.9" stroke-dasharray="2.2 0.5"/><rect x="154.3" y="812.1" width="32.4" height="10.8" rx="1.6" fill="#fff" stroke="#222" stroke-width="1.4" stroke-dasharray="2.6 1.6"/><g transform="translate(17.5,902.4)"><rect x="0" y="9" width="36" height="18" stroke="#000" stroke-width="1.3" fill="#fff" stroke-linejoin="round"/></g><g transform="translate(62.5,902.4)"><rect x="0" y="9" width="36" height="18" rx="3" stroke="#000" stroke-width="1.3" fill="#fff" stroke-linejoin="round"/></g><g transform="translate(107.5,902.4)"><text x="18" y="19" font-size="6.5" fill="#777" text-anchor="middle">Text</text></g><g transform="translate(152.5,902.4)"><text x="0" y="13" font-size="5.2" font-weight="bold" fill="#333">Heading</text><path d="M0 18.5H32M0 21H34M0 23.5H33M0 26H30" stroke="#aaa" stroke-width="0.9" stroke-dasharray="2.4 0.8"/></g><g transform="translate(197.5,902.4)"><ellipse cx="18" cy="18" rx="18" ry="12" stroke="#000" stroke-width="1.3" fill="#fff" stroke-linejoin="round"/></g><g transform="translate(17.5,945)"><rect x="1" y="1" width="34" height="34" stroke="#000" stroke-width="1.3" fill="#fff" stroke-linejoin="round"/></g><g transform="translate(62.5,945)"><circle cx="18" cy="18" r="17" stroke="#000" stroke-width="1.3" fill="#fff" stroke-linejoin="round"/></g><g transform="translate(107.5,945)"><rect x="0" y="9" width="36" height="18" stroke="#000" stroke-width="1.3" fill="#fff" stroke-linejoin="round"/><path d="M3.6 9V27M32.4 9V27" stroke="#000" stroke-width="1.3" fill="#fff" stroke-linejoin="round"/></g><g transform="translate(152.5,945)"><path d="M18 1L35 18L18 35L1 18Z" stroke="#000" stroke-width="1.3" fill="#fff" stroke-linejoin="round"/></g><g transform="translate(197.5,945)"><path d="M7 9H36L29 27H0Z" stroke="#000" stroke-width="1.3" fill="#fff" stroke-linejoin="round"/></g><g transform="translate(17.5,987.6)"><path d="M8 6H28L36 18L28 30H8L0 18Z" stroke="#000" stroke-width="1.3" fill="#fff" stroke-linejoin="round"/></g><g transform="translate(62.5,987.6)"><path d="M5 1L31 18L5 35Z" stroke="#000" stroke-width="1.3" fill="#fff" stroke-linejoin="round"/></g><g transform="translate(107.5,987.6)"><path d="M5 6C5 -0.6 31 -0.6 31 6V30C31 36.6 5 36.6 5 30Z" stroke="#000" stroke-width="1.3" fill="#fff" stroke-linejoin="round"/><path d="M5 6C5 12.6 31 12.6 31 6" stroke="#000" stroke-width="1.3" fill="#fff" stroke-linejoin="round" fill="none"/></g><g transform="translate(152.5,987.6)"><path d="M9 12C1 12 -1 20 5.4 21.6C-1 25 6.4 32 11.6 28.4C15 34 27 34 30.6 28.4C38 28.4 38 21.2 33.4 18C38 11 30.6 6 24.2 9C19.6 3.6 10.6 5 9 12Z" stroke="#000" stroke-width="1.3" fill="#fff" stroke-linejoin="round"/></g><g transform="translate(197.5,987.6)"><path d="M0 6H36V26C27 19.6 22.6 19.6 18 25C13.4 30.4 9 30.4 0 25Z" stroke="#000" stroke-width="1.3" fill="#fff" stroke-linejoin="round"/></g><g transform="translate(17.5,1029.8)"><rect x="1" y="1" width="34" height="34" stroke="#000" stroke-width="1.3" fill="#fff" stroke-linejoin="round"/><path d="M1 9H35M9 1V35" stroke="#000" stroke-width="1.3" fill="#fff" stroke-linejoin="round"/></g><g transform="translate(62.5,1029.8)"><path d="M0 6H29L36 12.6V30H7L0 23.4Z" stroke="#000" stroke-width="1.3" fill="#fff" stroke-linejoin="round"/><path d="M0 6L7 12.6H36M7 12.6V30" stroke="#000" stroke-width="1.3" fill="#fff" stroke-linejoin="round" fill="none"/><path d="M0 6L7 12.6V30L0 23.4Z" fill="#e6e6e6" stroke="#000" stroke-width="1.3"/></g><g transform="translate(107.5,1029.8)"><path d="M0 6H29L36 18L29 30H0L7 18Z" stroke="#000" stroke-width="1.3" fill="#fff" stroke-linejoin="round"/></g><g transform="translate(152.5,1029.8)"><path d="M7 9H29L36 27H0Z" stroke="#000" stroke-width="1.3" fill="#fff" stroke-linejoin="round"/></g><g transform="translate(197.5,1029.8)"><path d="M0 10C9 16.6 13.4 16.6 18 10C22.6 3.4 27 3.4 36 10V28C27 21.4 22.6 21.4 18 28C13.4 34.6 9 34.6 0 28Z" stroke="#000" stroke-width="1.3" fill="#fff" stroke-linejoin="round"/></g><g transform="translate(17.5,1072.5)"><path d="M4 1H23L32 10V35H4Z" stroke="#000" stroke-width="1.3" fill="#fff" stroke-linejoin="round"/><path d="M23 1V10H32" stroke="#000" stroke-width="1.3" fill="#fff" stroke-linejoin="round" fill="none"/></g><g transform="translate(62.5,1072.5)"><path d="M13 1H32V35H4V10Z" stroke="#000" stroke-width="1.3" fill="#fff" stroke-linejoin="round"/></g><g transform="translate(107.5,1072.5)"><path d="M0 6H36V21H24L18.6 31V21H0Z" stroke="#000" stroke-width="1.3" fill="#fff" stroke-linejoin="round"/></g><g transform="translate(152.5,1072.5)"><circle cx="18" cy="5" r="4" stroke="#000" stroke-width="1.3" fill="#fff" stroke-linejoin="round"/><path d="M18 9V23M10 13H26M18 23L10 35M18 23L26 35" stroke="#000" stroke-width="1.3" fill="#fff" stroke-linejoin="round" fill="none"/></g><g transform="translate(197.5,1072.5)"><path d="M5 1C38 1 38 35 5 35C18 26 18 10 5 1Z" stroke="#000" stroke-width="1.3" fill="#fff" stroke-linejoin="round"/></g><g transform="translate(17.5,1115)"><path d="M5 1C38 1 38 35 5 35Z" stroke="#000" stroke-width="1.3" fill="#fff" stroke-linejoin="round"/></g><g transform="translate(62.5,1115)"><path d="M9 3H36C28 9 28 27 36 33H9C-3 33 -3 3 9 3Z" stroke="#000" stroke-width="1.3" fill="#fff" stroke-linejoin="round"/></g><g transform="translate(107.5,1115)"><rect x="1" y="1" width="34" height="34" stroke="#000" stroke-width="1.3" fill="#fff" stroke-linejoin="round"/></g><g transform="translate(152.5,1115)"><rect x="1" y="1" width="34" height="34" stroke="#000" stroke-width="1.3" fill="#fff" stroke-linejoin="round"/><path d="M1 5H35" stroke="#000" stroke-width="1.3" fill="#fff" stroke-linejoin="round"/></g><g transform="translate(197.5,1115)"><rect x="1" y="1" width="34" height="34" stroke="#000" stroke-width="1.3" fill="#fff" stroke-linejoin="round"/><path d="M4.6 1V35" stroke="#000" stroke-width="1.3" fill="#fff" stroke-linejoin="round"/></g><g transform="translate(17.5,1157.5)"><rect x="0" y="2" width="36" height="32" stroke="#000" stroke-width="1.3" fill="#fff" stroke-linejoin="round"/><path d="M0 10H36" stroke="#000" stroke-width="1.3" fill="#fff" stroke-linejoin="round"/><text x="18" y="8" font-size="3.5" fill="#777" text-anchor="middle">List</text><text x="2" y="16" font-size="3.2" fill="#777">Item 1</text><text x="2" y="24" font-size="3.2" fill="#777">Item 2</text><text x="2" y="32" font-size="3.2" fill="#777">Item 3</text></g><g transform="translate(62.5,1157.5)"><text x="2" y="20" font-size="5.2" fill="#777">List Item</text></g><g transform="translate(107.5,1157.5)"><path d="M4 35C34 35 22 17 16 13C8 7 18 3 30 3.4" stroke="#5a656a" stroke-width="1.4" fill="none"/><path d="M34 3.6L25.4 0.4L27.4 3.8L25 7.2Z" fill="#5a656a"/></g><g transform="translate(152.5,1157.5)"><path d="M1.6 34.4L3.6 24.8L6 27.2L27.2 6L24.8 3.6L34.4 1.6L32.4 11.2L30 8.8L8.8 30L11.2 32.4Z" stroke="#5a656a" stroke-width="1.4" fill="none"/></g><g transform="translate(197.5,1157.5)"><path d="M1.6 30.6L25 7.2L21.4 3.6L34.4 1.6L32.4 14.6L28.8 11L5.4 34.4Z" stroke="#5a656a" stroke-width="1.4" fill="none"/></g><g transform="translate(17.5,1200)"><path d="M2 34L34 2" stroke="#5a656a" stroke-width="1.4" fill="none" stroke-dasharray="4.5 4.5"/></g><g transform="translate(62.5,1200)"><path d="M2 34L34 2" stroke="#5a656a" stroke-width="1.4" fill="none" stroke-dasharray="1.4 4"/></g><g transform="translate(107.5,1200)"><path d="M2 34L34 2" stroke="#5a656a" stroke-width="1.4" fill="none"/></g><g transform="translate(152.5,1200)"><path d="M8 28L28 8" stroke="#5a656a" stroke-width="1.4" fill="none"/><path d="M4.6 31.4L7 23L13 29ZM31.4 4.6L23 7L29 13Z" fill="#5a656a"/></g><g transform="translate(197.5,1200)"><path d="M4.6 31.4L28 8" stroke="#5a656a" stroke-width="1.4" fill="none"/><path d="M31.4 4.6L23 7L29 13Z" fill="#5a656a"/></g><g transform="translate(17.5,1242.2)"><path d="M0 16.6H36M0 19.6H36" stroke="#5a656a" stroke-width="1.4" fill="none"/></g><g transform="translate(62.5,1242.2)"><path d="M1 18H30" stroke="#5a656a" stroke-width="1.4" fill="none"/><path d="M35 18L27.4 14.8L29.4 18L27.4 21.2Z" fill="#5a656a"/><text x="14" y="19.6" font-size="3" fill="#888" text-anchor="middle">Label</text></g><g transform="translate(107.5,1242.2)"><path d="M1 18H30" stroke="#5a656a" stroke-width="1.4" fill="none"/><path d="M35 18L27.4 14.8L29.4 18L27.4 21.2Z" fill="#5a656a"/><path d="M2 19.6H9M16 19.6H24" stroke="#999" stroke-width="0.8"/></g><g transform="translate(152.5,1242.2)"><path d="M1 18H30" stroke="#5a656a" stroke-width="1.4" fill="none"/><path d="M35 18L27.4 14.8L29.4 18L27.4 21.2Z" fill="#5a656a"/><path d="M2 19.6H9M16 19.6H24M29 20H33" stroke="#999" stroke-width="0.8"/></g><g transform="translate(197.5,1242.2)"><path d="M1 18H30" stroke="#5a656a" stroke-width="1.4" fill="none"/><path d="M35 18L27.4 14.8L29.4 18L27.4 21.2Z" fill="#5a656a"/><rect x="14" y="15" width="8" height="6" fill="#111"/><path d="M15.4 16.4L18 18.6L20.6 16.4" stroke="#fff" stroke-width="0.7" fill="none"/></g></svg>
<div class="a" style="left:1699px;top:129px;width:1px;height:1371px;background:#dcdee2"></div>
<div class="a" style="left:1700px;top:129px;width:300px;height:1371px;background:#fbfbfb"></div>
<div class="a" style="left:1833px;top:129px;width:167px;height:42px;background:#f1f3f4;border-left:1px solid #dcdee2;border-bottom:1px solid #dcdee2"></div>
<div class="a" style="left:1966px;top:129px;width:1px;height:41px;background:#dcdee2"></div>
<div class="t" style="left:1726.4px;top:145px;font-size:15.5px;color:#555;font-weight:bold;letter-spacing:0.423px;">Diagramm</div>
<div class="t" style="left:1881.6px;top:144px;font-size:15.5px;color:#555;font-weight:bold;letter-spacing:-0.133px;">Style</div>
<svg class="a" style="left:1976px;top:141px" width="16" height="16" viewBox="0 0 16 16"><path d="M2.8 3.2L12.2 12.6M12.2 3.2L2.8 12.6" stroke="#a9bbd4" stroke-width="2.2" fill="none"/></svg>
<div class="t" style="left:1718px;top:193px;font-size:15px;color:#5f5f5f;font-weight:bold;letter-spacing:-0.431px;">Ansicht</div>
<div class="a" style="left:1718px;top:223px;width:15px;height:15px;background:#0d6efd;border-radius:2.5px"></div><svg class="a" style="left:1718px;top:223px" width="15" height="15" viewBox="0 0 15 15"><path d="M3.2 7.6L6.2 10.6L11.8 4.2" stroke="#fff" stroke-width="2.1" fill="none"/></svg>
<div class="t" style="left:1741.2px;top:225px;font-size:15px;color:#737373;letter-spacing:-0.003px;">Gitternetz</div>
<div class="a" style="left:1718px;top:253px;width:15px;height:15px;background:#0d6efd;border-radius:2.5px"></div><svg class="a" style="left:1718px;top:253px" width="15" height="15" viewBox="0 0 15 15"><path d="M3.2 7.6L6.2 10.6L11.8 4.2" stroke="#fff" stroke-width="2.1" fill="none"/></svg>
<div class="t" style="left:1741.2px;top:255px;font-size:15px;color:#737373;letter-spacing:-0.213px;">Seitenansicht</div>
<div class="a" style="left:1718px;top:283px;width:15px;height:15px;background:#fff;border:1.4px solid #767676;border-radius:3px"></div>
<div class="t" style="left:1741.2px;top:285px;font-size:15px;color:#737373;letter-spacing:0.146px;">Hintergrund</div>
<div class="a" style="left:1718px;top:313px;width:15px;height:15px;background:#fff;border:1.4px solid #767676;border-radius:3px"></div>
<div class="t" style="left:1741.2px;top:315px;font-size:15px;color:#737373;letter-spacing:-0.277px;">Schatten</div>
<div class="a" style="left:1843.2px;top:219.3px;width:59.3px;height:25.5px;background:#fff;border:1px solid #c8c8c8;border-radius:5px"></div>
<div class="t" style="left:1866.2px;top:225px;font-size:15px;color:#000;letter-spacing:-0.175px;">10 pt</div>
<div class="a" style="left:1903.2px;top:220.5px;width:14.3px;height:25.8px;background:#fbfbfb;border:1px solid #dcdcdc;border-radius:3px"></div>
<svg class="a" style="left:1903px;top:220px" width="15" height="26" viewBox="0 0 15 26"><path d="M3.6 9L7.3 4.6L11 9Z" fill="#d8d8d8" stroke="#b0b0b0" stroke-width="0.9"/><path d="M3.6 17L7.3 21.4L11 17Z" fill="#d8d8d8" stroke="#b0b0b0" stroke-width="0.9"/><path d="M1 13H13.6" stroke="#e0e0e0" stroke-width="1"/></svg>
<div class="a" style="left:1923.2px;top:218.2px;width:56.5px;height:26.6px;background:#e9e9e9;border:1px solid #8f8f8f;border-radius:5px"></div>
<div class="a" style="left:1928px;top:223.2px;width:47.2px;height:16.5px;background:#dcdcde;border:1.4px solid #111"></div>
<div class="a" style="left:1848.2px;top:278.2px;width:69.6px;height:26.3px;background:#efefef;border:1px solid #8a8a8a;border-radius:5px"></div>
<div class="t" style="left:1858.2px;top:284px;font-size:15px;color:#111;letter-spacing:-0.062px;">Ändern</div>
<div class="a" style="left:1700px;top:353px;width:300px;height:1px;background:#dfe1e5"></div>
<div class="t" style="left:1718px;top:371px;font-size:15px;color:#5f5f5f;font-weight:bold;letter-spacing:-0.079px;">Optionen</div>
<div class="a" style="left:1718px;top:402px;width:15px;height:15px;background:#0d6efd;border-radius:2.5px"></div><svg class="a" style="left:1718px;top:402px" width="15" height="15" viewBox="0 0 15 15"><path d="M3.2 7.6L6.2 10.6L11.8 4.2" stroke="#fff" stroke-width="2.1" fill="none"/></svg>
<div class="t" style="left:1741.2px;top:403px;font-size:15px;color:#737373;letter-spacing:0.002px;">Verbindungspfeile</div>
<div class="a" style="left:1718px;top:432px;width:15px;height:15px;background:#0d6efd;border-radius:2.5px"></div><svg class="a" style="left:1718px;top:432px" width="15" height="15" viewBox="0 0 15 15"><path d="M3.2 7.6L6.2 10.6L11.8 4.2" stroke="#fff" stroke-width="2.1" fill="none"/></svg>
<div class="t" style="left:1741.2px;top:433px;font-size:15px;color:#737373;letter-spacing:0.033px;">Verbindungspunkte</div>
<div class="a" style="left:1718px;top:462px;width:15px;height:15px;background:#0d6efd;border-radius:2.5px"></div><svg class="a" style="left:1718px;top:462px" width="15" height="15" viewBox="0 0 15 15"><path d="M3.2 7.6L6.2 10.6L11.8 4.2" stroke="#fff" stroke-width="2.1" fill="none"/></svg>
<div class="t" style="left:1741.2px;top:463px;font-size:15px;color:#737373;letter-spacing:-0.115px;">Führungslinien</div>
<div class="a" style="left:1718px;top:492px;width:15px;height:15px;background:#0d6efd;border-radius:2.5px"></div><svg class="a" style="left:1718px;top:492px" width="15" height="15" viewBox="0 0 15 15"><path d="M3.2 7.6L6.2 10.6L11.8 4.2" stroke="#fff" stroke-width="2.1" fill="none"/></svg>
<div class="t" style="left:1741.2px;top:493px;font-size:15px;color:#737373;letter-spacing:-0.069px;">Automatisch speichern</div>
<div class="a" style="left:1700px;top:532px;width:300px;height:1px;background:#dfe1e5"></div>
<div class="t" style="left:1718px;top:551px;font-size:15px;color:#5f5f5f;font-weight:bold;letter-spacing:-0.157px;">Papiergröße</div>
<div class="a" style="left:1718px;top:575px;width:256.8px;height:21.7px;background:#fff;border:1px solid #8f8f8f;border-radius:5px"></div>
<div class="t" style="left:1724px;top:579px;font-size:15px;color:#000;letter-spacing:-0.016px;">A4 (210 mm x 297 mm)</div>
<svg class="a" style="left:1955px;top:580px" width="16" height="14" viewBox="0 0 16 14"><path d="M2.6 4L8 9.6L13.4 4" stroke="#111" stroke-width="2.1" fill="none"/></svg>
<div class="a" style="left:1729px;top:611.6px;width:14.8px;height:14.8px;border:1.6px solid #0d6efd;border-radius:50%;background:#fff"></div>
<div class="a" style="left:1732.1px;top:614.7px;width:8.6px;height:8.6px;border-radius:50%;background:#0d6efd"></div>
<div class="t" style="left:1752.5px;top:614px;font-size:15px;color:#737373;letter-spacing:0.117px;">Hochformat</div>
<div class="a" style="left:1843.9px;top:611.2px;width:14.6px;height:14.6px;border:1.4px solid #767676;border-radius:50%;background:#fff"></div>
<div class="t" style="left:1867.7px;top:614px;font-size:15px;color:#737373;letter-spacing:0.094px;">Querformat</div>
<div class="a" style="left:1700px;top:652px;width:300px;height:1px;background:#dfe1e5"></div>
<div class="a" style="left:1718px;top:668.3px;width:261.7px;height:24.4px;background:#efefef;border:1px solid #7a7a7a;border-radius:3.5px"></div>
<div class="t" style="left:1785.2px;top:673px;font-size:15px;color:#111;letter-spacing:-0.052px;">Daten bearbeiten...</div>
<div class="a" style="left:1718px;top:695.3px;width:261.7px;height:24.4px;background:#efefef;border:1px solid #7a7a7a;border-radius:3.5px"></div>
<div class="t" style="left:1775.3px;top:700px;font-size:15px;color:#111;letter-spacing:-0.028px;">Standardstyle löschen</div>
<div class="a" style="left:1700px;top:737px;width:300px;height:1px;background:#dfe1e5"></div>
</body></html>
